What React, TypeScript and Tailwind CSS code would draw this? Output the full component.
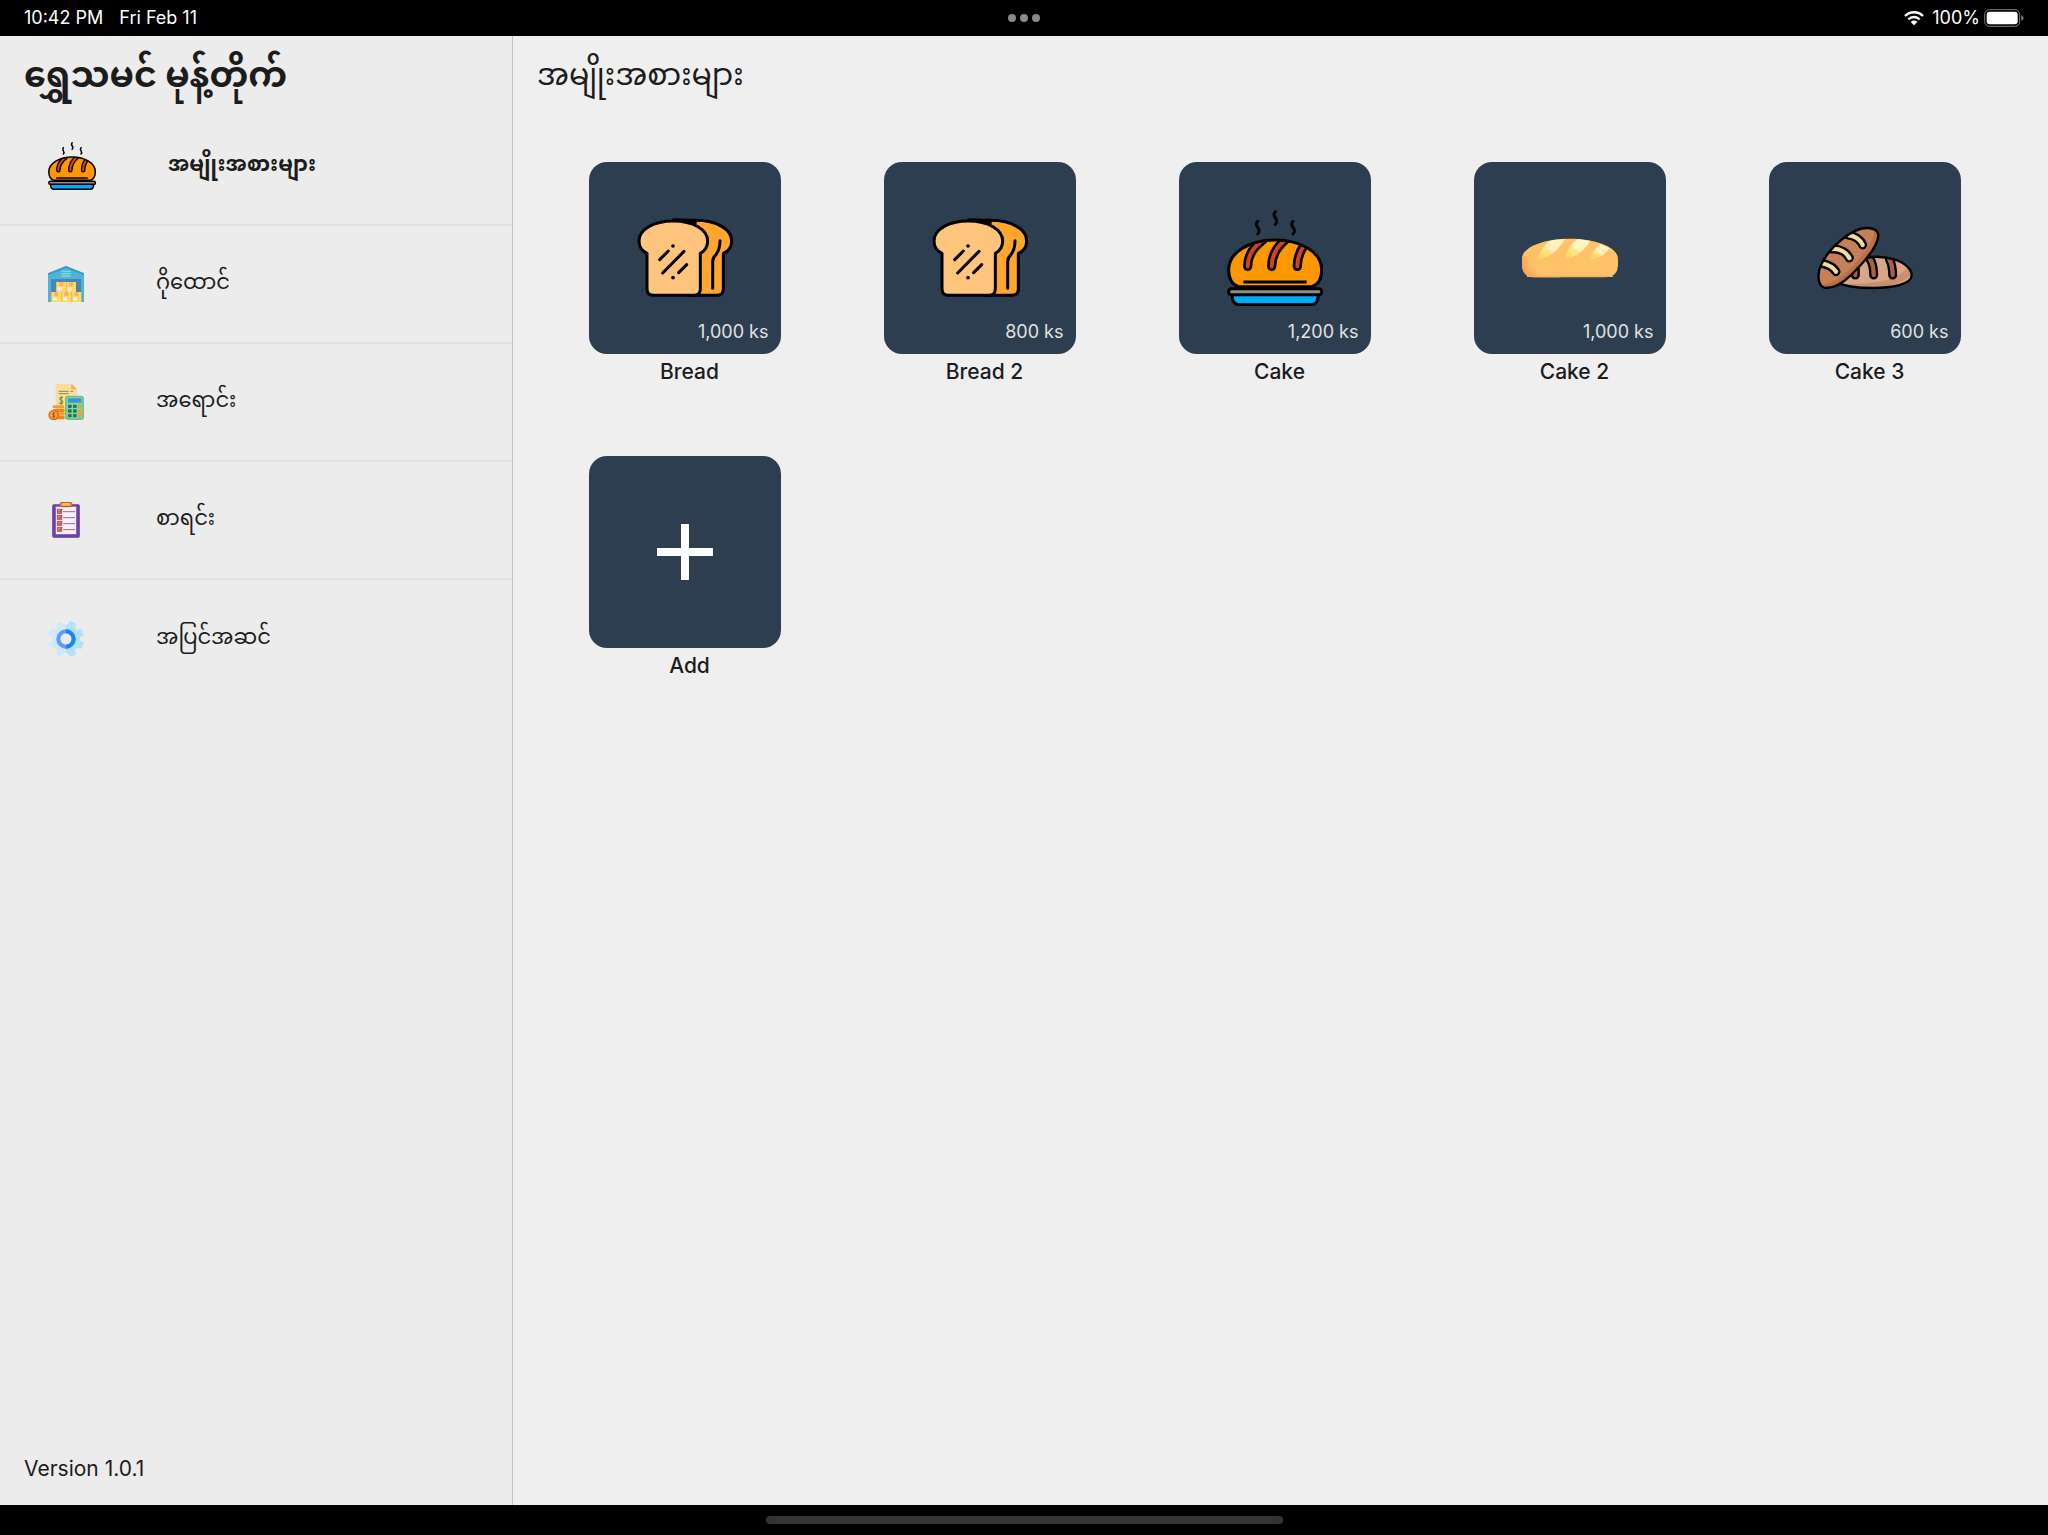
import React from "react";

type IconProps = { className?: string };

function CakeIcon({ className }: IconProps) {
  const slashes = [
    "M233 348C233 318 248 292 278 270",
    "M305 348C305 318 318 292 346 268",
    "M382 348C382 322 388 304 404 284",
  ];
  return (
    <svg viewBox="171 179 288 288" className={className} aria-hidden="true">
      <clipPath id="bun">
        <path d="M205 409C186 402 176 382 176 358C176 306 240 269 316 269C392 269 455 306 455 358C455 382 446 402 426 409Z" />
      </clipPath>
      <path d="M205 409C186 402 176 382 176 358C176 306 240 269 316 269C392 269 455 306 455 358C455 382 446 402 426 409Z" fill="#ff9800" />
      <g clipPath="url(#bun)" fill="none" strokeLinecap="round">
        {slashes.map((d) => (
          <path key={d} d={d} stroke="#000" strokeWidth="28" />
        ))}
        {slashes.map((d) => (
          <path key={d + "r"} d={d} stroke="#d5421c" strokeWidth="12" />
        ))}
      </g>
      <g stroke="#000" strokeWidth="9" strokeLinejoin="round">
        <path d="M205 409C186 402 176 382 176 358C176 306 240 269 316 269C392 269 455 306 455 358C455 382 446 402 426 409Z" fill="none" />
        <path d="M220 395H410" />
        <path d="M187 430V441Q189 463 208 463H423Q442 463 444 441V430Z" fill="#03a9f4" />
        <rect x="176" y="415" width="279" height="18" rx="8" fill="#8c8c8c" />
      </g>
      <g fill="none" stroke="#000" strokeWidth="9" strokeLinecap="round">
        <path d="M263 213C248 229 279 235 263 251" />
        <path d="M316 184C301 200 332 206 316 222" />
        <path d="M369 213C354 229 385 235 369 251" />
      </g>
    </svg>
  );
}

function BreadIcon({ className }: IconProps) {
  return (
    <svg viewBox="171 179 288 288" className={className} aria-hidden="true">
      <g stroke="#000" strokeWidth="9" strokeLinecap="round" strokeLinejoin="round">
        <path d="M280 210H345C412 210 455 238 455 272C455 290 446 302 430 309V415Q430 435 410 435H330Z" fill="#ffa62f" />
        <path d="M280 209C330 207 346 217 346 217" fill="none" />
        <path d="M280 212C220 212 177 238 177 272C177 290 186 302 201 309V415Q201 435 221 435H341Q361 435 361 415V309C374 302 383 290 383 272C383 238 340 212 280 212Z" fill="#ffc57d" />
        <path d="M420 271Q420 296 408 313Q398 322 398 334V414" fill="none" />
        <path d="M239 328L265 302M248 368L312 303M296 367L320 343" />
        <path d="M279 287v.1M279 382v.1" strokeWidth="11" />
      </g>
    </svg>
  );
}

function LoafIcon({ className }: IconProps) {
  return (
    <svg viewBox="185 179 288 288" className={className} aria-hidden="true">
      <defs>
        <radialGradient id="crust" gradientUnits="userSpaceOnUse" cx="300" cy="300" r="150">
          <stop offset="0.62" stopColor="#ffc269" />
          <stop offset="0.88" stopColor="#fb9a55" />
        </radialGradient>
        <linearGradient id="cut" x1="0" y1="1" x2="0.9" y2="0">
          <stop offset="0.1" stopColor="#ffd860" />
          <stop offset="0.45" stopColor="#ffe68c" />
          <stop offset="0.5" stopColor="#fff3c0" />
        </linearGradient>
      </defs>
      <path d="M185 325C185 288 255 265 329 265C403 265 473 290 473 325V347Q470 380 438 381H220Q188 380 185 347Z" fill="#ffc269" />
      <path d="M185 320V347Q188 380 220 381H300V300Z" fill="url(#crust)" />
      <path d="M200 378H458" stroke="#fbb055" strokeWidth="4" />
      <g fill="url(#cut)">
        <path d="M234 327C234 306 256 275 276 269L313 266C302 290 268 325 234 327Z" />
        <path d="M314 327C314 306 336 275 352 266L390 271C380 290 348 325 314 327Z" />
        <path d="M392 327C393 308 406 291 420 282L448 293C437 308 420 325 392 327Z" />
      </g>
    </svg>
  );
}

function BaguettesIcon({ className }: IconProps) {
  const rear = ["M1230 326C1240 342 1241 355 1241 374", "M1288 326C1296 342 1298 355 1298 374", "M1186 350V374"];
  const front = ["M1164 254C1184 256 1202 268 1208 284", "M1116 296C1140 294 1160 306 1168 323", "M1082 338C1102 342 1120 350 1128 364"];
  const frontLoaf =
    "M1255 253C1256 290 1206 342 1172 375C1148 398 1120 413 1098 413C1070 410 1072 366 1084 342C1106 294 1176 231 1222 233Q1252 234 1255 253Z";
  const rearLoaf = "M1190 330C1270 302 1355 336 1355 375C1355 403 1295 413 1237 413C1192 413 1158 409 1130 396Z";
  return (
    <svg viewBox="1071 179 288 288" className={className} aria-hidden="true">
      <clipPath id="rearLoaf">
        <path d={rearLoaf} />
      </clipPath>
      <clipPath id="frontLoaf">
        <path d={frontLoaf} />
      </clipPath>
      <path d={rearLoaf} fill="#d9a688" />
      <g clipPath="url(#rearLoaf)" fill="none" strokeLinecap="round">
        <path d="M1130 412C1220 412 1310 410 1350 360" stroke="#c98f70" strokeWidth="22" />
        {rear.map((d) => (
          <path key={d} d={d} stroke="#000" strokeWidth="27" />
        ))}
        {rear.map((d) => (
          <path key={d + "f"} d={d} stroke="#a9613f" strokeWidth="13" />
        ))}
      </g>
      <path d={rearLoaf} fill="none" stroke="#000" strokeWidth="7" />
      <path d={frontLoaf} fill="#c68057" />
      <g clipPath="url(#frontLoaf)" fill="none" strokeLinecap="round">
        <path d="M1252 250C1246 300 1150 405 1095 412" stroke="#b87046" strokeWidth="20" />
        {front.map((d) => (
          <path key={d} d={d} stroke="#000" strokeWidth="27" />
        ))}
        {front.map((d) => (
          <path key={d + "f"} d={d} stroke="#f3dc9a" strokeWidth="13" />
        ))}
      </g>
      <path d={frontLoaf} fill="none" stroke="#000" strokeWidth="7" />
    </svg>
  );
}

function PlusIcon({ className }: IconProps) {
  return (
    <svg viewBox="0 0 96 96" className={className} aria-hidden="true">
      <path d="M20 48H76M48 20V76" stroke="#fff" strokeWidth="8" />
    </svg>
  );
}

function WarehouseIcon({ className }: IconProps) {
  const boxes = [
    [78, 96],
    [108, 96],
    [63, 126],
    [93, 126],
    [124, 126],
  ];
  return (
    <svg viewBox="54 48 108 108" className={className} aria-hidden="true">
      <path d="M54 70L108 48L162 70V156H54Z" fill="#4fb3d6" />
      <path d="M54 70L108 48L162 70V76L108 54L54 76Z" fill="#3a9dc4" />
      <path d="M63 87H153V156H63Z" fill="#4a86b4" />
      <path d="M94 64H122M94 71H122M94 78H122" stroke="#86d2ea" strokeWidth="4" />
      {boxes.map(([x, y]) => (
        <g key={`${x}-${y}`}>
          <rect x={x} y={y} width="30" height="30" fill="#ffd76b" />
          <rect x={x} y={y} width="3" height="30" fill="#f9bf3f" />
          <rect x={x + 10} y={y} width="11" height="12" fill="#f9b06a" />
          <rect x={x + 5} y={y + 16} width="13" height="9" fill="#fff4e6" />
        </g>
      ))}
    </svg>
  );
}

function SalesIcon({ className }: IconProps) {
  return (
    <svg viewBox="54 44 108 108" className={className} aria-hidden="true">
      <path d="M77 48Q77 44 81 44H124L141 60V134H77Z" fill="#ffd9a0" />
      <path d="M124 44L141 60H124Z" fill="#f9a94f" />
      <path d="M86 66H116M121 66H129M86 73H116" stroke="#6a9e3a" strokeWidth="3" />
      <path d="M99 85C91 80 86 90 93 93C102 96 99 106 87 101M94 79V107" fill="none" stroke="#6a9e3a" strokeWidth="3.5" />
      <g fill="#f79a32">
        <rect x="68" y="108" width="34" height="9" rx="3" />
        <rect x="70" y="119" width="34" height="9" rx="3" fill="#ee8420" />
        <rect x="68" y="129" width="36" height="10" rx="3" />
        <rect x="70" y="140" width="34" height="10" rx="3" fill="#ee8420" />
      </g>
      <circle cx="71" cy="137" r="16" fill="#d9731a" />
      <circle cx="71" cy="137" r="11" fill="#f9a23c" />
      <path d="M75 132C68 128 66 136 71 137C77 138 75 146 67 142M71 128V146" fill="none" stroke="#a8540f" strokeWidth="3" />
      <rect x="105" y="79" width="57" height="73" rx="9" fill="#6cc58c" />
      <rect x="110" y="84" width="47" height="63" rx="5" fill="#83d49e" />
      <rect x="114" y="87" width="40" height="13" fill="#3d8fe0" />
      <g fill="#2c7355">
        {[106, 120, 134].map((y) => (
          <React.Fragment key={y}>
            <rect x="114" y={y} width="11" height="10" rx="2" />
            <rect x="129" y={y} width="11" height="10" rx="2" />
          </React.Fragment>
        ))}
      </g>
      <rect x="144" y="106" width="10" height="10" rx="2" fill="#f79a32" />
      <rect x="144" y="121" width="10" height="23" rx="2" fill="#f79a32" />
    </svg>
  );
}

function ChecklistIcon({ className }: IconProps) {
  return (
    <svg viewBox="54 39 108 108" className={className} aria-hidden="true">
      <rect x="68" y="47" width="80" height="98" rx="3" fill="#5b4aa5" stroke="#8a3fa3" strokeWidth="3" />
      <rect x="77" y="52" width="62" height="84" fill="#f6f1f5" stroke="#8a5ab0" strokeWidth="2" />
      <rect x="90" y="40" width="36" height="13" rx="6" fill="#f4a63f" stroke="#a5523f" strokeWidth="3" />
      <rect x="99" y="43" width="18" height="6" rx="3" fill="#ffc84a" />
      {[67, 85, 103, 121].map((y) => (
        <g key={y}>
          <rect x="82" y={y - 6} width="13" height="12" fill="#e58a4e" stroke="#b0566a" strokeWidth="3" />
          <path d={`M86 ${y}L89 ${y + 3}L96 ${y - 5}`} fill="none" stroke="#7d3a68" strokeWidth="2.5" />
          <path d={`M99 ${y + 1}H135`} stroke="#a35fb8" strokeWidth="3" />
        </g>
      ))}
    </svg>
  );
}

function GearIcon({ className }: IconProps) {
  return (
    <svg viewBox="0 0 108 108" className={className} aria-hidden="true">
      <clipPath id="gearRight">
        <rect x="54" y="0" width="54" height="108" />
      </clipPath>
      <g fill="#cfeafc">
        <circle cx="54" cy="54" r="42" />
        {[22, 67, 112, 157, 202, 247, 292, 337].map((a) => (
          <path key={a} d="M42 18L44 1Q54 -2 64 1L66 18Z" transform={`rotate(${a} 54 54)`} />
        ))}
      </g>
      <g fill="#b5e0f9" clipPath="url(#gearRight)">
        <circle cx="54" cy="54" r="42" />
        {[22, 67, 112, 157].map((a) => (
          <path key={a} d="M42 18L44 1Q54 -2 64 1L66 18Z" transform={`rotate(${a} 54 54)`} />
        ))}
      </g>
      <circle cx="54" cy="54" r="23" fill="#ececec" stroke="#5a9cff" strokeWidth="12" />
      <path d="M54 31A23 23 0 0 1 54 77" fill="none" stroke="#1687fb" strokeWidth="12" />
    </svg>
  );
}

function WifiIcon({ className }: IconProps) {
  return (
    <svg viewBox="0 0 60 46" className={className} aria-hidden="true">
      <g fill="none" stroke="#fff" strokeWidth="7">
        <path d="M3 17A38 38 0 0 1 57 17" />
        <path d="M13 27A24 24 0 0 1 47 27" />
      </g>
      <path d="M30 45L20 35A14 14 0 0 1 40 35Z" fill="#fff" />
    </svg>
  );
}

function BatteryIcon({ className }: IconProps) {
  return (
    <svg viewBox="0 0 120 54" className={className} aria-hidden="true">
      <rect x="2" y="2" width="105" height="50" rx="14" fill="none" stroke="#7d7d7d" strokeWidth="3" />
      <rect x="8" y="8" width="93" height="38" rx="9" fill="#fff" />
      <path d="M112 18Q119 22 119 27Q119 32 112 36Z" fill="#7d7d7d" />
    </svg>
  );
}

const navItems = [
  { label: "အမျိုးအစားများ", Icon: CakeIcon, active: true },
  { label: "ဂိုထောင်", Icon: WarehouseIcon, active: false },
  { label: "အရောင်း", Icon: SalesIcon, active: false },
  { label: "စာရင်း", Icon: ChecklistIcon, active: false },
  { label: "အပြင်အဆင်", Icon: GearIcon, active: false },
];

const products = [
  { name: "Bread", price: "1,000 ks", Icon: BreadIcon },
  { name: "Bread 2", price: "800 ks", Icon: BreadIcon },
  { name: "Cake", price: "1,200 ks", Icon: CakeIcon },
  { name: "Cake 2", price: "1,000 ks", Icon: LoafIcon },
  { name: "Cake 3", price: "600 ks", Icon: BaguettesIcon },
  { name: "Add", price: "", Icon: PlusIcon },
];

export default function App() {
  return (
    <div className="flex min-h-screen flex-col bg-black font-['Inter','Noto_Sans_Myanmar','Noto_Sans',sans-serif] text-[#1c1c1c]">
      <header className="grid h-9 shrink-0 grid-cols-3 items-center px-6 text-lg leading-6 text-white">
        <div className="flex gap-4">
          <span>10:42 PM</span>
          <span>Fri Feb 11</span>
        </div>
        <div className="flex justify-center gap-1">
          <span className="size-2 rounded-full bg-[#8a8a8a]" />
          <span className="size-2 rounded-full bg-[#8a8a8a]" />
          <span className="size-2 rounded-full bg-[#8a8a8a]" />
        </div>
        <div className="flex items-center justify-end gap-1">
          <WifiIcon className="mr-1 h-4 w-5" />
          <span>100%</span>
          <BatteryIcon className="h-[18px] w-10" />
        </div>
      </header>

      <div className="flex grow">
        <aside className="box-content flex w-1/4 shrink-0 flex-col border-r border-[#c2c2c2] bg-[#ececec]">
          <h1 className="flex h-[72px] items-center px-6 pt-1 text-[35px] leading-[56px] font-bold">ရွှေသမင် မုန့်တိုက်</h1>
          <nav className="flex flex-col divide-y-2 divide-[#e0e0e0]">
            {navItems.map(({ label, Icon, active }) => (
              <a
                key={label}
                href="#"
                aria-current={active ? "page" : undefined}
                className="flex h-[118px] items-center gap-[72px] pl-12"
              >
                <Icon className={active ? "size-12" : "size-9"} />
                <span className={active ? "pb-1 text-[21px] leading-8 font-bold" : "pb-1 text-[21px] leading-8"}>{label}</span>
              </a>
            ))}
          </nav>
          <p className="mt-auto px-6 pb-[22px] text-[21px] leading-7">Version 1.0.1</p>
        </aside>

        <main className="grow bg-[#efefef]">
          <h2 className="flex h-[72px] items-center px-6 pt-1 text-3xl">အမျိုးအစားများ</h2>
          <ul className="mt-[54px] grid grid-cols-5 gap-y-[70px] pr-9 pl-6">
            {products.map(({ name, price, Icon }) => (
              <li key={name}>
                <button type="button" className="mx-auto flex w-48 flex-col">
                  <span className="relative flex size-48 items-center justify-center rounded-[18px] bg-[#2c3e50]">
                    <Icon className="size-24" />
                    <span className="absolute right-3 bottom-2.5 text-lg leading-6 text-[#e2e2e2]">{price}</span>
                  </span>
                  <span className="h-8 w-full pt-1 pl-2.5 text-center text-[21px] leading-7 font-medium">{name}</span>
                </button>
              </li>
            ))}
          </ul>
        </main>
      </div>

      <footer className="flex h-[30px] shrink-0 items-center justify-center">
        <div className="h-2 w-[517px] rounded-full bg-[#333333]" />
      </footer>
    </div>
  );
}
